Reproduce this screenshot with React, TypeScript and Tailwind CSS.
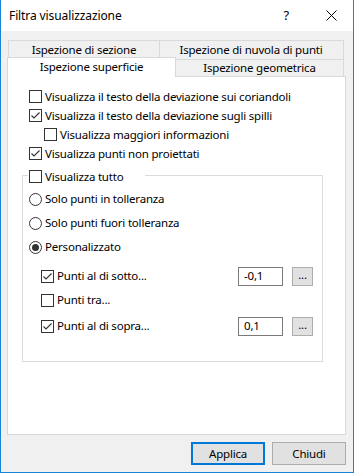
import React from "react";

const font = { fontFamily: '"Noto Sans", "Open Sans", sans-serif' };

function CheckBox({ checked }: { checked?: boolean }) {
  return (
    <span className="w-[13px] h-[13px] border border-[#333333] bg-white flex items-center justify-center shrink-0">
      {checked && (
        <svg width="11" height="11" viewBox="0 0 11 11">
          <path d="M1.5 5.5 L4 8 L9.5 2.5" fill="none" stroke="#333333" strokeWidth="1.1" />
        </svg>
      )}
    </span>
  );
}

function Radio({ checked }: { checked?: boolean }) {
  return (
    <span className="w-[13px] h-[13px] rounded-full border border-[#333333] bg-white flex items-center justify-center shrink-0">
      {checked && <span className="w-[7px] h-[7px] rounded-full bg-[#333333]" />}
    </span>
  );
}

function CheckRow({ label, checked, indent }: { label: string; checked?: boolean; indent?: boolean }) {
  return (
    <div className={`h-[19px] flex items-center gap-[3px] ${indent ? "pl-[36px]" : "pl-[21px]"}`}>
      <CheckBox checked={checked} />
      <span>{label}</span>
    </div>
  );
}

function RadioRow({ label, checked }: { label: string; checked?: boolean }) {
  return (
    <div className="h-[24px] flex items-center gap-[3px] pl-[6px]">
      <Radio checked={checked} />
      <span>{label}</span>
    </div>
  );
}

function RangeRow({ label, checked, value, className }: { label: string; checked?: boolean; value?: string; className?: string }) {
  return (
    <div className={`h-[24px] flex items-center pl-[18px] pr-[9px] ${className ?? ""}`}>
      <CheckBox checked={checked} />
      <span className="ml-[3px]">{label}</span>
      {value !== undefined && (
        <>
          <div className="ml-auto w-[45px] h-[19px] border border-[#7a7a7a] bg-white flex items-center pl-[5px]">{value}</div>
          <div className="ml-[9px] w-[21px] h-[19px] border border-[#adadad] bg-[#e1e1e1] flex items-center justify-center leading-none pb-[3px]">...</div>
        </>
      )}
    </div>
  );
}

export default function App() {
  return (
    <div
      className="w-[354px] h-[473px] flex flex-col bg-[#f0f0f0] border-l border-r border-b border-[#1883d7] text-[11.5px] tracking-[-0.2px] text-black overflow-hidden"
      style={font}
    >
      {/* title bar */}
      <div className="h-[31px] bg-white flex items-center shrink-0">
        <span className="pl-[8px] text-[12px] tracking-[-0.1px]">Filtra visualizzazione</span>
        <span className="ml-auto mr-[37px] text-[13px]">?</span>
        <svg width="11" height="11" viewBox="0 0 11 11" className="mr-[16px]">
          <path d="M0.5 0.5 L10.5 10.5 M10.5 0.5 L0.5 10.5" stroke="#000" strokeWidth="1" />
        </svg>
      </div>

      <div className="flex-1 flex flex-col pl-[6px] pr-[7px] pt-[9px] pb-[7px]">
        {/* tab rows */}
        <div className="h-[19px] flex pl-[1px]">
          <div className="w-[152px] border-t border-l border-r border-[#d9d9d9] flex items-center justify-center pb-[1px]">
            Ispezione di sezione
          </div>
          <div className="w-[185px] -ml-px border-t border-r border-[#d9d9d9] flex items-center justify-center pb-[1px]">
            Ispezione di nuvola di punti
          </div>
        </div>
        <div className="h-[19px] -mt-[2px] flex items-end">
          <div className="relative z-10 w-[169px] h-[20px] -mb-px bg-white border-t border-l border-r border-[#d9d9d9] flex items-center justify-center pb-[1px]">
            Ispezione superficie
          </div>
          <div className="w-[168px] h-[17px] border-t border-r border-[#d9d9d9] bg-[#f0f0f0] flex items-center justify-center">
            Ispezione geometrica
          </div>
        </div>

        {/* panel */}
        <div className="h-[359px] bg-white border border-[#d9d9d9] flex flex-col pt-[10px]">
          <CheckRow label="Visualizza il testo della deviazione sui coriandoli" />
          <CheckRow label="Visualizza il testo della deviazione sugli spilli" checked />
          <CheckRow label="Visualizza maggiori informazioni" indent />
          <CheckRow label="Visualizza punti non proiettati" checked />

          <fieldset className="ml-[14px] mt-[4px] w-[301px] border border-[#dcdcdc] px-0 pt-0 pb-[23px]">
            <legend className="ml-[5px] w-[117px] h-[16px] flex items-end gap-[3px] pl-[1px]">
              <CheckBox />
              <span className="leading-[13px]">Visualizza tutto</span>
            </legend>
            <div className="mt-[4px]">
              <RadioRow label="Solo punti in tolleranza" />
              <RadioRow label="Solo punti fuori tolleranza" />
              <RadioRow label="Personalizzato" checked />
            </div>
            <RangeRow className="mt-[5px]" label="Punti al di sotto..." checked value="-0,1" />
            <RangeRow label="Punti tra..." />
            <RangeRow className="mt-[2px]" label="Punti al di sopra..." checked value="0,1" />
          </fieldset>
        </div>

        {/* buttons */}
        <div className="mt-[7px] flex justify-end gap-[7px]">
          <button className="w-[74px] h-[23px] border-2 border-[#0078d7] bg-[#e1e1e1] flex items-center justify-center">
            Applica
          </button>
          <button className="w-[74px] h-[23px] border border-[#adadad] bg-[#e1e1e1] flex items-center justify-center">
            Chiudi
          </button>
        </div>
      </div>
    </div>
  );
}
